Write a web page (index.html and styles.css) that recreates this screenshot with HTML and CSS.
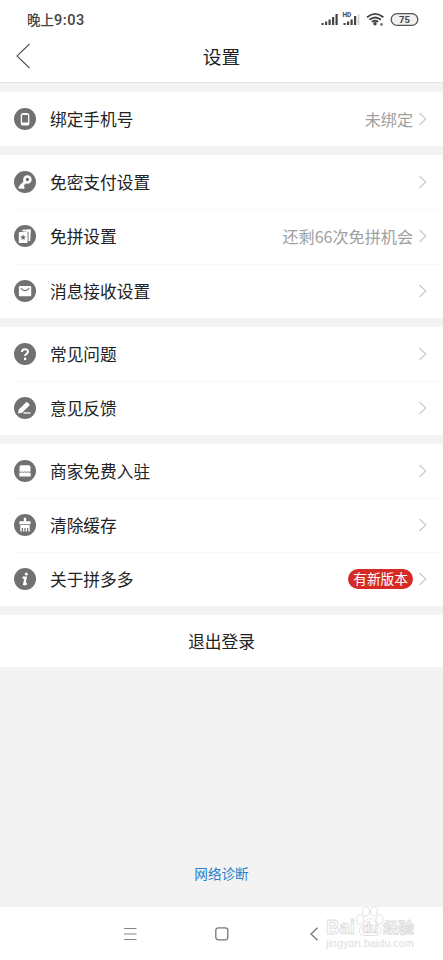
FILE: index.html
```html
<!DOCTYPE html>
<html lang="zh-CN">
<head>
<meta charset="utf-8">
<title>设置</title>
<link rel="stylesheet" href="styles.css">
</head>
<body>
<svg class="defs" width="0" height="0" aria-hidden="true">
  <symbol id="chev" viewBox="0 0 10 16"><path d="M1.500 2 7.700 8 1.500 14" fill="none" stroke="#cdcdcd" stroke-width="1.300"/></symbol>
</svg>
<div class="screen">
  <div class="status">
    <span class="time">晚上<b>9:03</b></span>
    <svg class="status-icons" width="100" height="20" viewBox="0 0 100 20">
      <g fill="#444">
        <path d="M1.500 13h2.200v2h-2.200zM5 11.500h2.200V15H5zM8.500 9.500h2.200V15h-2.200zM12 7h2.200v8H12zM15.500 4h2.200v11h-2.200z"/>
        <path d="M23.500 13h2.200v2h-2.200zM27 11.500h2.200V15H27zM30.500 9.500h2.200V15h-2.200zM34 6h2.200v9H34z"/>
        <path d="M37.700 4.500h1.600V15h-1.600z" fill="#ccc"/>
        <circle cx="55" cy="13.700" r="1.700"/>
        <circle cx="61.500" cy="14.500" r="1.400" fill="#777"/>
      </g>
      <text x="22.500" y="6.700" class="hd">HD</text>
      <g fill="none" stroke="#444" stroke-width="1.800">
        <path d="M47 7.200q8.200-6.600 16.400 0M49.500 9.800q5.700-4.600 11.400 0M52 12q3.100-2.500 6.200 0"/>
      </g>
      <rect x="71.200" y="3.700" width="26.600" height="11.600" rx="5.800" fill="#f0f0f0" stroke="#555" stroke-width="1.300"/>
      <text x="84.500" y="13" class="battery">75</text>
    </svg>
  </div>
  <header class="header">
    <svg class="back" width="16" height="28" viewBox="0 0 16 28"><path d="M14.500 2 2 14l12.500 12" fill="none" stroke="#555" stroke-width="1.100"/></svg>
    <h1>设置</h1>
  </header>

  <main>
    <section class="group one">
      <div class="row">
        <svg class="icon" viewBox="0 0 22 22"><circle cx="11" cy="11" r="11" fill="#717171"/><rect x="7.400" y="6" width="7.300" height="10.800" rx="1" fill="none" stroke="#fff" stroke-width="1.300"/><path d="M7.300 14.500h7.600v2.300H7.300zM9.200 5h3.600v1.800H9.200z" fill="#fff"/></svg>
        <span class="label">绑定手机号</span><span class="value">未绑定</span><svg class="chevron"><use href="#chev"/></svg>
      </div>
    </section>
    <section class="group three tall">
      <div class="row">
        <svg class="icon" viewBox="0 0 22 22"><circle cx="11" cy="11" r="11" fill="#717171"/><circle cx="13.400" cy="8.500" r="3" fill="none" stroke="#fff" stroke-width="2.600"/><path d="m11 11-5 5.500M7.500 14.500l1.600 2" fill="none" stroke="#fff" stroke-width="3" stroke-linecap="round"/></svg>
        <span class="label">免密支付设置</span><svg class="chevron"><use href="#chev"/></svg>
      </div>
      <div class="row">
        <svg class="icon" viewBox="0 0 22 22"><circle cx="11" cy="11" r="11" fill="#717171"/><path d="M8.300 4.800 16 4.300a.8.800 0 0 1 .9.800L16.200 16h-1.700V7.100L8.300 6.300z" fill="#fff"/><rect x="4.800" y="7" width="8.800" height="11" rx=".8" fill="#fff"/><path d="m9.100 9.500.8 1.800 2 .2-1.500 1.400.4 2-1.700-1-1.700 1 .4-2-1.500-1.400 2-.2z" fill="#717171"/></svg>
        <span class="label">免拼设置</span><span class="value">还剩66次免拼机会</span><svg class="chevron"><use href="#chev"/></svg>
      </div>
      <div class="row">
        <svg class="icon" viewBox="0 0 22 22"><circle cx="11" cy="11" r="11" fill="#717171"/><rect x="4.900" y="6" width="12.300" height="10.200" rx=".8" fill="#fff"/><path d="M6.800 8.200q4.200 4.800 8.400 0" fill="none" stroke="#717171" stroke-width="1.100"/></svg>
        <span class="label">消息接收设置</span><svg class="chevron"><use href="#chev"/></svg>
      </div>
    </section>
    <section class="group two">
      <div class="row">
        <svg class="icon" viewBox="0 0 22 22"><circle cx="11" cy="11" r="11" fill="#717171"/><path d="M7.900 9C7.900 5.300 14 5.300 14 8.700c0 2-2.900 2.100-2.900 4.200" fill="none" stroke="#fff" stroke-width="2"/><circle cx="11.100" cy="15.900" r="1.300" fill="#fff"/></svg>
        <span class="label">常见问题</span><svg class="chevron"><use href="#chev"/></svg>
      </div>
      <div class="row">
        <svg class="icon" viewBox="0 0 22 22"><circle cx="11" cy="11" r="11" fill="#717171"/><path d="m4 16.500.8-4L11.900 5.400q.8-.8 1.700 0l1.600 1.600q.8.800 0 1.700L8.100 15.800z" fill="#fff"/><path d="M9.500 16h7" stroke="#fff" stroke-width="1.300"/></svg>
        <span class="label">意见反馈</span><svg class="chevron"><use href="#chev"/></svg>
      </div>
    </section>
    <section class="group three">
      <div class="row">
        <svg class="icon" viewBox="0 0 22 22"><circle cx="11" cy="11" r="11" fill="#717171"/><path d="M7 5.300h8q1.400 0 1.500 2v4q-1.400 1.300-2.700 0-1.400 1.300-2.800 0-1.400 1.300-2.800 0-1.300 1.300-2.700 0v-4q.1-2 1.500-2zM5.300 12.500q1.500.5 2.900-.3 1.300.9 2.800 0 1.500.9 2.800 0 1.400.8 2.900.3v3.200q0 .9-.9.900H6.200q-.9 0-.9-.9z" fill="#fff"/></svg>
        <span class="label">商家免费入驻</span><svg class="chevron"><use href="#chev"/></svg>
      </div>
      <div class="row">
        <svg class="icon" viewBox="0 0 22 22"><circle cx="11" cy="11" r="11" fill="#717171"/><path d="M9.800 3.800h2.400v3.500h4.400v2.900H5.400V7.300h4.400zM6.300 11h9.400v6.400h-1.500V14h-1.200v3.400h-1.400V14h-1.200v3.400H9V14H7.800v3.400H6.300z" fill="#fff"/></svg>
        <span class="label">清除缓存</span><svg class="chevron"><use href="#chev"/></svg>
      </div>
      <div class="row">
        <svg class="icon" viewBox="0 0 22 22"><circle cx="11" cy="11" r="11" fill="#717171"/><circle cx="12.300" cy="6" r="1.600" fill="#fff"/><path d="M8.500 9.600h3.200l-1.500 6.600q1 .3 2.600-.8" fill="none" stroke="#fff" stroke-width="2.300"/></svg>
        <span class="label">关于拼多多</span><span class="badge">有新版本</span><svg class="chevron"><use href="#chev"/></svg>
      </div>
    </section>
    <section class="logout">退出登录</section>
  </main>
  <div class="diagnose">网络诊断</div>

  <nav class="nav">
    <svg width="14" height="14" viewBox="0 0 14 14"><path d="M1 1.500h12.500M1 7h12.500M1 12.500h12.500" stroke="#858585" stroke-width="1.200"/></svg>
    <svg width="14" height="14" viewBox="0 0 14 14"><rect x=".8" y=".8" width="12" height="12" rx="2.500" fill="none" stroke="#777" stroke-width="1.300"/></svg>
    <svg width="14" height="14" viewBox="0 0 14 14"><path d="M10.500.8 4 7l6.500 6.200" fill="none" stroke="#777" stroke-width="1.300"/></svg>
  </nav>
  <svg class="watermark" width="96" height="50" viewBox="0 0 96 50">
    <g fill="#fff" stroke="#dcdcdc" stroke-width=".9">
      <ellipse cx="36" cy="15.500" rx="3.500" ry="4.600"/><ellipse cx="42" cy="7.500" rx="3.500" ry="4.700"/><ellipse cx="50" cy="7.500" rx="3.500" ry="4.700"/><ellipse cx="55.500" cy="15.500" rx="3.500" ry="4.600"/>
      <path d="M46 14.500c4 0 5.500 4.500 8 7 5 4.500 2.500 10-2.500 10h-11c-5.500 0-7.500-5.500-2.500-10 2.500-2.500 4-7 8-7z"/>
      <text x="2" y="30" class="wm-main" textLength="29" lengthAdjust="spacingAndGlyphs">Bai</text>
      <text x="38" y="29" class="wm-du" textLength="16">du</text>
      <text x="59" y="29" class="wm-cn" textLength="31" lengthAdjust="spacingAndGlyphs">经验</text>
    </g>
    <text x="2" y="42.500" class="wm-url" textLength="88" lengthAdjust="spacingAndGlyphs">jingyan.baidu.com</text>
  </svg>
</div>
</body>
</html>
```
FILE: styles.css
```css
* { box-sizing: border-box; }
body {
  margin: 0;
  font-family: "Noto Sans CJK SC", sans-serif;
  color: #222;
}
.defs { position: absolute; }
.screen {
  position: relative;
  display: flex;
  flex-direction: column;
  width: 443px;
  height: 960px;
  overflow: hidden;
  background: #f3f3f3;
}
.status {
  display: flex;
  justify-content: space-between;
  align-items: center;
  height: 38px;
  padding: 1px 23px 0 27px;
  background: #fff;
}
.time { font-size: 13.5px; font-weight: 500; line-height: 20px; color: #444; }
.time b { font-family: Roboto, sans-serif; font-weight: 500; font-size: 14.5px; letter-spacing: .6px; }
.hd { font: bold 6.5px Roboto, sans-serif; fill: #444; }
.battery { font: bold 9.5px Roboto, sans-serif; fill: #444; text-anchor: middle; }
.header {
  display: grid;
  grid-template-columns: 60px 1fr 60px;
  align-items: center;
  height: 45px;
  padding-bottom: 8px;
  border-bottom: 1px solid #e2e2e2;
  background: #fff;
}
.back { margin-left: 15px; }
h1 { margin: 0; text-align: center; font-size: 18.7px; line-height: 28px; font-weight: 400; }
main {
  display: flex;
  flex-direction: column;
  gap: 9px;
  padding-top: 9px;
}
.group { display: flex; flex-direction: column; background: #fff; }
.one { height: 54px; }
.two { height: 108px; }
.three { height: 162px; }
.tall { height: 163px; }
.row {
  display: flex;
  flex: 1;
  align-items: center;
  padding: 0 15px 0 14px;
}
.row + .row {
  background: linear-gradient(#f8f8f8, #f8f8f8) 14px 0 / 100% 1px no-repeat;
}
.icon { width: 22px; height: 22px; flex: none; }
.label { flex: 1; margin-left: 14px; font-size: 16.7px; line-height: 24px; }
.value { font-size: 16.1px; line-height: 24px; color: #a0a0a0; }
.chevron { width: 10px; height: 16px; margin-left: 5px; flex: none; }
.badge {
  height: 20px;
  padding: 0 5px;
  border-radius: 10px;
  background: #d52b24;
  color: #fff;
  font-size: 13.7px;
  line-height: 19px;
}
.logout { height: 52px; background: #fff; text-align: center; font-size: 16.7px; line-height: 52px; }
.diagnose { margin-top: auto; margin-bottom: 24px; text-align: center; font-size: 13.6px; line-height: 20px; color: #2a80c8; }
.nav {
  display: flex;
  align-items: center;
  justify-content: center;
  gap: 78px;
  height: 53px;
  background: #fff;
}
.watermark { position: absolute; left: 324px; top: 904px; }
.wm-main { font: bold 21px "Liberation Sans", sans-serif; }
.wm-du { font: bold 14px "Liberation Sans", sans-serif; }
.wm-cn { font: bold 15px "Noto Sans CJK SC", sans-serif; }
.wm-url { font: 10px "Liberation Sans", sans-serif; fill: #dedede; }
```
